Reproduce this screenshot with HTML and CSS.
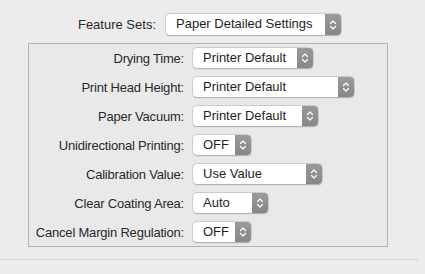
FILE: index.html
```html
<!DOCTYPE html>
<html lang="en">

<head>
  <meta charset="UTF-8">
  <meta name="viewport" content="width=device-width, initial-scale=1.0">
  <title>Paper Detailed Settings</title>
  <link rel="stylesheet" href="styles.css">
</head>

<body>
  <div class="panel">
    <div class="feature-row">
      <label class="label">Feature Sets:</label>
      <div class="popup popup-feature">
        <span class="popup-text">Paper Detailed Settings</span>
        <span class="stepper"><svg width="8" height="12" viewBox="0 0 8 12"><path d="M1.5 4.5 L4 2 L6.5 4.5 M1.5 7.5 L4 10 L6.5 7.5" /></svg></span>
      </div>
    </div>

    <div class="group">
      <label class="label">Drying Time:</label>
      <div class="popup w-drying">
        <span class="popup-text">Printer Default</span>
        <span class="stepper"><svg width="8" height="12" viewBox="0 0 8 12"><path d="M1.5 4.5 L4 2 L6.5 4.5 M1.5 7.5 L4 10 L6.5 7.5" /></svg></span>
      </div>

      <label class="label">Print Head Height:</label>
      <div class="popup w-head">
        <span class="popup-text">Printer Default</span>
        <span class="stepper"><svg width="8" height="12" viewBox="0 0 8 12"><path d="M1.5 4.5 L4 2 L6.5 4.5 M1.5 7.5 L4 10 L6.5 7.5" /></svg></span>
      </div>

      <label class="label">Paper Vacuum:</label>
      <div class="popup w-vacuum">
        <span class="popup-text">Printer Default</span>
        <span class="stepper"><svg width="8" height="12" viewBox="0 0 8 12"><path d="M1.5 4.5 L4 2 L6.5 4.5 M1.5 7.5 L4 10 L6.5 7.5" /></svg></span>
      </div>

      <label class="label">Unidirectional Printing:</label>
      <div class="popup w-off">
        <span class="popup-text">OFF</span>
        <span class="stepper"><svg width="8" height="12" viewBox="0 0 8 12"><path d="M1.5 4.5 L4 2 L6.5 4.5 M1.5 7.5 L4 10 L6.5 7.5" /></svg></span>
      </div>

      <label class="label">Calibration Value:</label>
      <div class="popup w-calib">
        <span class="popup-text">Use Value</span>
        <span class="stepper"><svg width="8" height="12" viewBox="0 0 8 12"><path d="M1.5 4.5 L4 2 L6.5 4.5 M1.5 7.5 L4 10 L6.5 7.5" /></svg></span>
      </div>

      <label class="label">Clear Coating Area:</label>
      <div class="popup w-auto">
        <span class="popup-text">Auto</span>
        <span class="stepper"><svg width="8" height="12" viewBox="0 0 8 12"><path d="M1.5 4.5 L4 2 L6.5 4.5 M1.5 7.5 L4 10 L6.5 7.5" /></svg></span>
      </div>

      <label class="label">Cancel Margin Regulation:</label>
      <div class="popup w-off">
        <span class="popup-text">OFF</span>
        <span class="stepper"><svg width="8" height="12" viewBox="0 0 8 12"><path d="M1.5 4.5 L4 2 L6.5 4.5 M1.5 7.5 L4 10 L6.5 7.5" /></svg></span>
      </div>
    </div>

    <div class="separator"></div>
  </div>
</body>

</html>
```

FILE: styles.css
```css
body {
  margin: 0;
  font-family: "Liberation Sans", Arial, sans-serif;
  font-size: 13px;
  color: #2a2a2a;
  background-color: #ececec;
}

.panel {
  padding-top: 14px;
  height: 260px;
}

.feature-row {
  display: grid;
  grid-template-columns: 156px auto;
  column-gap: 10px;
  align-items: center;
  justify-content: start;
}

.label {
  justify-self: end;
  text-align: right;
  white-space: nowrap;
}

.group {
  display: grid;
  grid-template-columns: 155px auto;
  column-gap: 9px;
  row-gap: 9px;
  align-items: center;
  justify-items: start;
  box-sizing: border-box;
  width: 360px;
  height: 204px;
  margin-top: 8px;
  margin-left: 28px;
  padding: 4px 0 4px 0;
  border: 1px solid #b4b4b4;
  background-color: #e9e9e9;
}

.group .label {
  letter-spacing: -0.2px;
}

.popup {
  display: flex;
  align-items: stretch;
  box-sizing: border-box;
  height: 20px;
  background-color: #fff;
  border-radius: 4px;
  box-shadow: 0 0 0 0.5px rgba(0, 0, 0, 0.18), 0 0.5px 1.5px rgba(0, 0, 0, 0.2);
  overflow: hidden;
  color: #1e1e1e;
}

.popup-feature {
  width: 175px;
  height: 21px;
}

.popup-text {
  flex: 1;
  padding-left: 10px;
  line-height: 20px;
  white-space: nowrap;
}

.stepper {
  width: 16px;
  display: flex;
  align-items: center;
  justify-content: center;
  background: linear-gradient(#9a9a9a, #878787);
}

.stepper path {
  fill: none;
  stroke: #fff;
  stroke-width: 1.2;
  stroke-linecap: round;
  stroke-linejoin: round;
}

.w-drying {
  width: 120px;
}

.w-head {
  width: 161px;
}

.w-vacuum {
  width: 125px;
}

.w-off {
  width: 58px;
}

.w-calib {
  width: 129px;
}

.w-auto {
  width: 75px;
}

.separator {
  margin-top: 12px;
  width: 418px;
  height: 1px;
  background-color: #d2d2d2;
}
```
